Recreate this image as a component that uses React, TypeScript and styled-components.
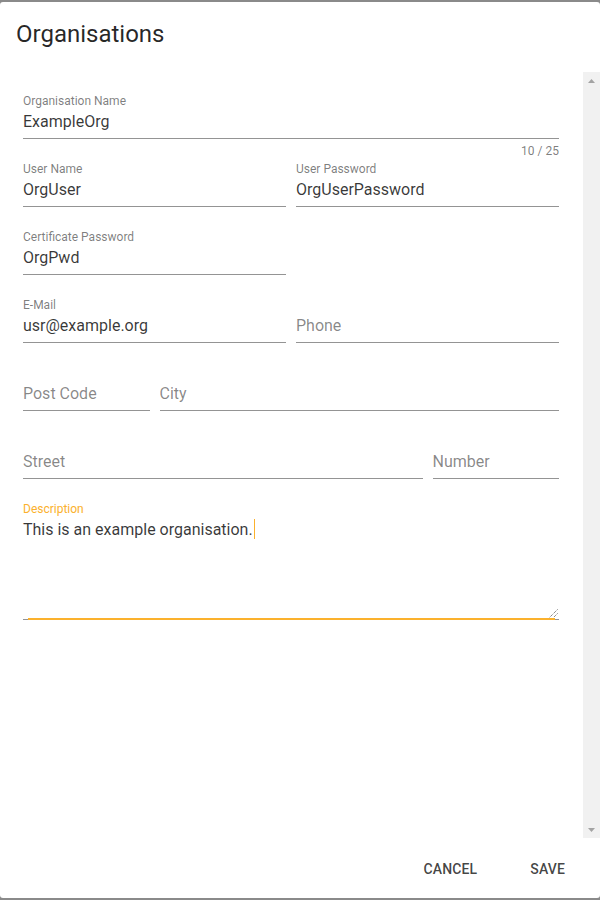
import React from "react";
import styled, { createGlobalStyle } from "styled-components";

const GlobalStyle = createGlobalStyle`
  html, body { margin: 0; padding: 0; background: #8a8a8a; }
  body { font-family: Roboto, "Noto Sans", Arial, sans-serif; }
  * { box-sizing: border-box; }
`;

const ACCENT = "#fbb12d";
const ARROW = "#a3a3a3";

const Dialog = styled.div`
  width: 600px;
  height: 896px;
  margin-top: 2px;
  background: #fff;
  border-radius: 3px;
  display: flex;
  flex-direction: column;
  overflow: hidden;
`;

const Title = styled.h2`
  margin: 0;
  padding: 16px 16px 22px 16px;
  font-size: 24px;
  line-height: 32px;
  font-weight: 400;
  color: rgba(0, 0, 0, 0.85);
`;

const BodyRow = styled.div`
  height: 766px;
  display: flex;
`;

const Body = styled.div`
  flex: 1;
  padding: 20px 24px 0 23px;
  overflow: hidden;
`;

const ScrollTrack = styled.div`
  width: 17px;
  background: #f1f1f1;
  display: flex;
  flex-direction: column;
  justify-content: space-between;
  align-items: center;
  padding: 7px 0 6px;
`;

const Grid = styled.div`
  display: grid;
  grid-template-columns: repeat(4, 1fr);
  column-gap: 10px;
`;

const FieldBox = styled.div<{ $span: number }>`
  grid-column: span ${(p) => p.$span};
  display: flex;
  flex-direction: column;
  height: 68px;
`;

const Label = styled.div<{ $focused?: boolean }>`
  height: 17px;
  padding-top: 1px;
  font-size: 12px;
  line-height: 16px;
  color: ${(p) => (p.$focused ? ACCENT : "rgba(0,0,0,0.52)")};
`;

const Value = styled.div<{ $placeholder?: boolean }>`
  margin-top: 1px;
  height: 24px;
  font-size: 16px;
  line-height: 24px;
  color: ${(p) => (p.$placeholder ? "rgba(0,0,0,0.48)" : "rgba(0,0,0,0.78)")};
  white-space: nowrap;
`;

const Line = styled.div`
  margin-top: 4px;
  height: 1px;
  background: rgba(0, 0, 0, 0.42);
`;

const Details = styled.div`
  height: 21px;
  display: flex;
  justify-content: flex-end;
  align-items: center;
  font-size: 12px;
  color: rgba(0, 0, 0, 0.52);
  padding-top: 3px;
`;

const AreaBox = styled.div`
  grid-column: span 4;
  display: flex;
  flex-direction: column;
`;

const AreaText = styled.div`
  position: relative;
  margin-top: 1px;
  height: 96px;
  font-size: 16px;
  line-height: 24px;
  color: rgba(0, 0, 0, 0.78);
`;

const Caret = styled.span`
  display: inline-block;
  width: 1px;
  height: 20px;
  background: ${ACCENT};
  vertical-align: -4px;
  margin-left: 1px;
`;

const Grip = styled.svg`
  position: absolute;
  right: 1px;
  bottom: -4px;
`;

const FocusLine = styled.div`
  position: relative;
  margin-top: 4px;
  height: 2px;
  &::before {
    content: "";
    position: absolute;
    left: 0;
    right: 0;
    bottom: 0;
    height: 1px;
    background: rgba(0, 0, 0, 0.42);
  }
  &::after {
    content: "";
    position: absolute;
    left: 5px;
    right: 4px;
    top: 0;
    height: 2px;
    background: ${ACCENT};
  }
`;

const Actions = styled.div`
  height: 60px;
  padding-top: 2px;
  display: flex;
  justify-content: flex-end;
  align-items: center;
  gap: 21px;
  padding-right: 19px;
`;

const TextButton = styled.button`
  height: 36px;
  padding: 0 16px;
  border: none;
  background: transparent;
  font-family: Roboto, Arial, sans-serif;
  font-size: 14px;
  font-weight: 500;
  letter-spacing: 0.01em;
  text-transform: uppercase;
  color: rgba(0, 0, 0, 0.74);
  cursor: pointer;
`;

type FieldProps = {
  label: string;
  value?: string;
  span: number;
  counter?: string;
};

function Field({ label, value, span, counter }: FieldProps) {
  const filled = value !== undefined;
  return (
    <FieldBox $span={span}>
      <Label>{filled ? label : ""}</Label>
      <Value $placeholder={!filled}>{filled ? value : label}</Value>
      <Line />
      <Details>{counter}</Details>
    </FieldBox>
  );
}

function Arrow({ down }: { down?: boolean }) {
  return (
    <svg width="7" height="4" viewBox="0 0 7 4">
      <path d={down ? "M0 0 H7 L3.5 4 Z" : "M0 4 H7 L3.5 0 Z"} fill={ARROW} />
    </svg>
  );
}

export default function App() {
  return (
    <>
      <GlobalStyle />
      <Dialog>
        <Title>Organisations</Title>
        <BodyRow>
          <Body>
            <Grid>
              <Field span={4} label="Organisation Name" value="ExampleOrg" counter="10 / 25" />
              <Field span={2} label="User Name" value="OrgUser" />
              <Field span={2} label="User Password" value="OrgUserPassword" />
              <Field span={2} label="Certificate Password" value="OrgPwd" />
              <FieldBox $span={2} />
              <Field span={2} label="E-Mail" value="usr@example.org" />
              <Field span={2} label="Phone" />
              <Field span={1} label="Post Code" />
              <Field span={3} label="City" />
              <Field span={3} label="Street" />
              <Field span={1} label="Number" />
              <AreaBox>
                <Label $focused>Description</Label>
                <AreaText>
                  This is an example organisation.
                  <Caret />
                  <Grip width="9" height="9" viewBox="0 0 9 9">
                    <path d="M8.5 0.5 L0.5 8.5 M8.5 4.5 L4.5 8.5" stroke="#555" strokeWidth="1" strokeDasharray="1 1" fill="none" />
                  </Grip>
                </AreaText>
                <FocusLine />
              </AreaBox>
            </Grid>
          </Body>
          <ScrollTrack>
            <Arrow />
            <Arrow down />
          </ScrollTrack>
        </BodyRow>
        <Actions>
          <TextButton>Cancel</TextButton>
          <TextButton>Save</TextButton>
        </Actions>
      </Dialog>
    </>
  );
}
